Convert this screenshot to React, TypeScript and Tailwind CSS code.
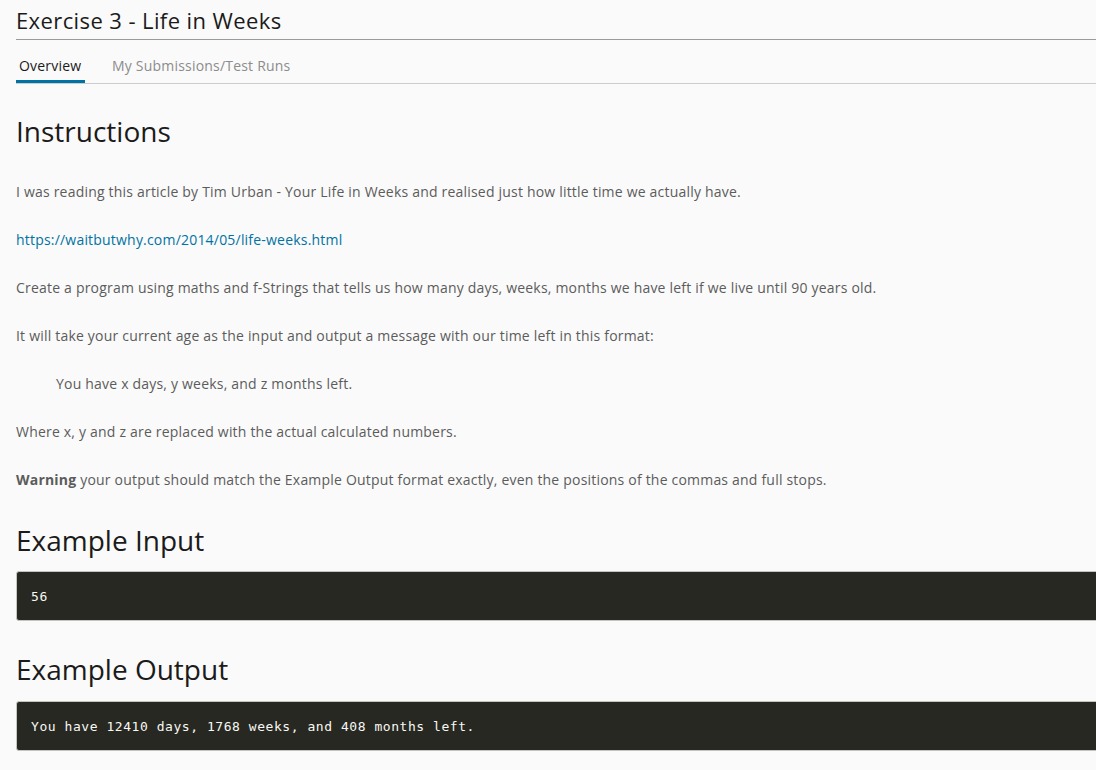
const sans = "font-['Open_Sans',sans-serif]";

const Para = ({ children, indent }: { children: React.ReactNode; indent?: boolean }) => (
  <p className={`text-[14px] leading-6 tracking-[0.2px] text-[#5c5c5c] ${indent ? "pl-10" : ""}`}>{children}</p>
);

const CodeBlock = ({ text, className }: { text: string; className?: string }) => (
  <pre
    className={`h-[50px] flex items-center pl-[14px] pt-px rounded-[3px] border border-[#c4c4c0] bg-[#272822] text-[#f8f8f2] text-[13px] font-['DejaVu_Sans_Mono',monospace] tracking-[0.55px] ${className ?? ""}`}
  >
    {text}
  </pre>
);

export default function App() {
  return (
    <div className={`min-h-[770px] w-full overflow-hidden bg-[#fafafa] ${sans}`}>
      <div className="w-[1300px] pl-4">
        <div className="h-10 border-b border-[#9a9a9a] flex items-center">
          <h1 className="text-[22px] leading-none tracking-[0.4px] text-[#1b1b1b] font-normal">
            Exercise 3 - Life in Weeks
          </h1>
        </div>

        <div className="h-[44px] border-b border-[#cccccc] flex gap-[27px] text-[14px] tracking-[0.2px]">
          <div className="pt-[18px] px-[3px] leading-4 border-b-[3px] border-[#0072a3] text-[#1b1b1b] w-[69px]">
            Overview
          </div>
          <div className="pt-[18px] leading-4 text-[#8c8c8c]">My Submissions/Test Runs</div>
        </div>

        <h2 className="mt-[29px] text-[28px] leading-9 text-[#1b1b1b] font-normal">Instructions</h2>

        <div className="mt-[31px] flex flex-col gap-6">
          <Para>
            I was reading this article by Tim Urban - Your Life in Weeks and realised just how little time we actually
            have.
          </Para>
          <Para>
            <a className="text-[#0072a3]">https://waitbutwhy.com/2014/05/life-weeks.html</a>
          </Para>
          <Para>
            Create a program using maths and f-Strings that tells us how many days, weeks, months we have left if we
            live until 90 years old.
          </Para>
          <Para>It will take your current age as the input and output a message with our time left in this format:</Para>
          <Para indent>You have x days, y weeks, and z months left.</Para>
          <Para>Where x, y and z are replaced with the actual calculated numbers.</Para>
          <Para>
            <strong className="font-bold">Warning</strong> your output should match the Example Output format exactly,
            even the positions of the commas and full stops.
          </Para>
        </div>

        <h2 className="mt-[30px] text-[28px] leading-9 text-[#1b1b1b] font-normal">Example Input</h2>
        <CodeBlock className="mt-[13px]" text="56" />

        <h2 className="mt-[30px] text-[28px] leading-9 text-[#1b1b1b] font-normal">Example Output</h2>
        <CodeBlock className="mt-[14px]" text="You have 12410 days, 1768 weeks, and 408 months left." />
      </div>
    </div>
  );
}
